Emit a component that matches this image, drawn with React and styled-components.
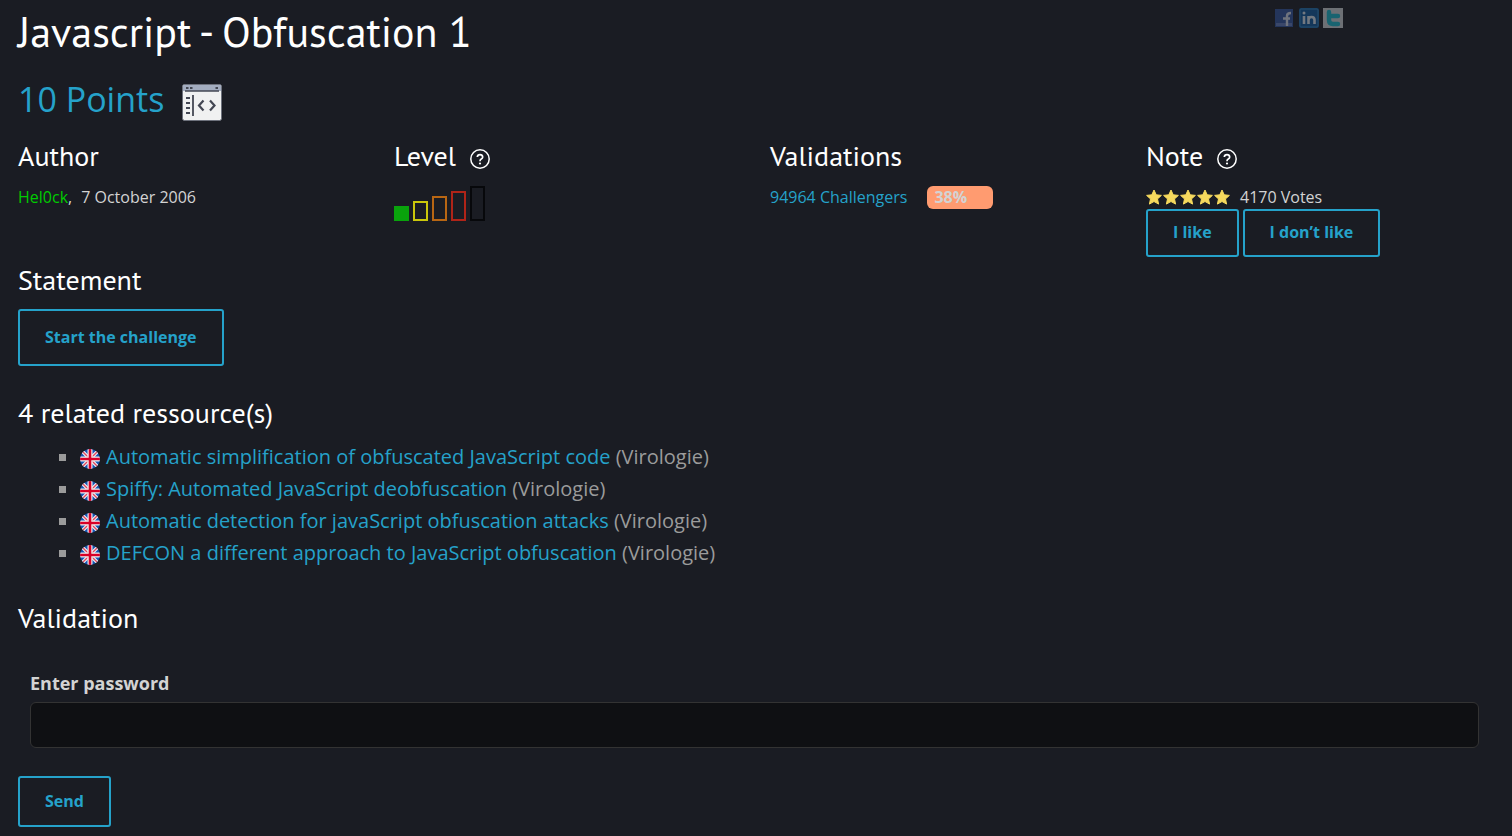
import React from "react";
import styled, { createGlobalStyle } from "styled-components";

const GlobalStyle = createGlobalStyle`
  *, *::before, *::after { box-sizing: border-box; }
  body {
    margin: 0;
    background: #1a1c23;
    color: #d3d3d3;
    font-family: "Open Sans", "Noto Sans", sans-serif;
    font-size: 16px;
    line-height: 24px;
  }
  svg { display: block; flex: none; }
`;

const blue = "#25a2ca";

const Page = styled.main`
  padding: 0 0 8px 8px;
`;

const Section = styled.section`
  padding: 0 10px;
  margin-top: ${(p) => p.$space || 0}px;
`;

const TitleRow = styled.header`
  display: grid;
  grid-template-columns: 5fr 1fr;
`;

const Title = styled.h1`
  margin: 0;
  padding: 4px 10px 0;
  color: #fff;
  font-family: "PT Sans", Lato, sans-serif;
  font-size: 42px;
  font-weight: 400;
  line-height: 56px;
`;

const Social = styled.nav`
  display: flex;
  gap: 4px;
  padding: 8px 14px;
  opacity: 0.5;
`;

const SocialLink = styled.a`
  display: block;
  width: 20px;
  height: 20px;
`;

const Points = styled.p`
  display: flex;
  align-items: center;
  gap: 18px;
  margin: 0;
  padding: 15px 10px 0;
  color: ${blue};
  font-size: 34px;
  line-height: 48px;

  svg { margin-top: 6px; }
`;

const Facts = styled.div`
  display: grid;
  grid-template-columns: repeat(4, 1fr);
  margin-top: 17px;
`;

const Fact = styled.section`
  padding: 0 10px;
`;

const Heading = styled.h2`
  display: flex;
  align-items: center;
  gap: 14px;
  margin: 0;
  color: #fff;
  font-family: "PT Sans", Lato, sans-serif;
  font-size: 28px;
  font-weight: 400;
  line-height: 32px;
`;

const HelpLink = styled.a`
  color: #fff;
  margin-top: 6px;
`;

const FactLine = styled.div`
  display: flex;
  align-items: center;
  gap: ${(p) => p.$gap || 9}px;
  margin-top: 13px;
`;

const TextLink = styled.a`
  color: ${(p) => (p.$author ? "#00cc00" : blue)};
  text-decoration: none;
`;

const Levels = styled.div`
  display: flex;
  align-items: flex-end;
  gap: 4px;
  height: 35px;
  margin-top: 14px;
`;

const Level = styled.span`
  width: 15px;
  height: ${(p) => p.$height}px;
  border: 2px solid ${(p) => p.$color};
  background: ${(p) => (p.$filled ? p.$color : "transparent")};
`;

const Rate = styled.strong`
  width: 66px;
  height: 23px;
  padding-left: 7px;
  border-radius: 6px;
  background: #ff9b70;
  color: #d3d3d3;
  line-height: 23px;
`;

const Stars = styled.span`
  display: flex;
  width: 85px;
`;

const Actions = styled.div`
  display: flex;
  gap: 4px;
`;

const buttonPadding = {
  small: "11px 25px 12px",
  medium: "13px 25px",
  large: "16px 25px",
};

const Button = styled.button`
  padding: ${(p) => buttonPadding[p.$size]};
  border: 2px solid ${blue};
  border-radius: 3px;
  background: transparent;
  color: ${blue};
  font: 700 16px/21px "Open Sans", "Noto Sans", sans-serif;
  cursor: pointer;
`;

const Resources = styled.ul`
  margin: 12px 0 0;
  padding: 0 0 0 40px;
  list-style: none;
  color: #9b9b9b;
  font-size: 20px;
  line-height: 32px;
`;

const Resource = styled.li`
  display: flex;
  align-items: center;
  gap: 6px;

  &::before {
    content: "";
    width: 7px;
    height: 7px;
    margin: 0 8px 0 1px;
    background: #9b9b9b;
  }

  svg { margin-top: 4px; }
`;

const Field = styled.div`
  display: flex;
  flex-direction: column;
  gap: 7px;
  margin: 37px 23px 28px 12px;
`;

const Label = styled.label`
  font-size: 18px;
  font-weight: 700;
`;

const Input = styled.input`
  width: 100%;
  height: 46px;
  padding: 0 12px;
  border: 1px solid #333;
  border-radius: 6px;
  background: #0f1013;
  color: #d3d3d3;
  font: inherit;
`;

function FacebookIcon() {
  return (
    <svg width="20" height="20" viewBox="0 0 20 20">
      <rect x="0" y="1" width="18" height="18" fill="#2f4f93" />
      <rect x="1" y="15" width="16" height="3" fill="#5a72ae" />
      <path d="M12 18V8q0-3 4-3M8 10.500h7" fill="none" stroke="#c3c9d6" strokeWidth="2.400" />
    </svg>
  );
}

function LinkedinIcon() {
  return (
    <svg width="20" height="20" viewBox="0 0 20 20">
      <rect width="20" height="20" rx="2" fill="#0f5291" />
      <rect x="1" y="1" width="18" height="18" rx="1" fill="none" stroke="#2f7fb5" />
      <path d="M5 8v8M9.500 16V8M9.500 12q0-3 3-3t3 3v4" fill="none" stroke="#c9d3dc" strokeWidth="2.600" />
      <circle cx="5" cy="5" r="1.500" fill="#c9d3dc" />
    </svg>
  );
}

function TwitterIcon() {
  return (
    <svg width="20" height="20" viewBox="0 0 20 20">
      <rect width="20" height="20" fill="#bfc3c7" />
      <path d="M6 4v8q0 4 4 4h5M6 8h9" fill="none" stroke="#18a9bd" strokeWidth="4.400" strokeLinecap="round" />
    </svg>
  );
}

function CodeWindowIcon() {
  return (
    <svg width="40" height="37" viewBox="0 0 40 37">
      <rect x="0.5" y="0.5" width="39" height="36" rx="2" fill="#f0f1f1" stroke="#6d717c" />
      <path d="M1 2q0-1 1-1h36q1 0 1 1v5H1z" fill="#a3adc0" />
      <path d="M3 7h34" stroke="#434753" strokeWidth="1.600" />
      <path d="M4 4h2.500M8 4h2.500M33.500 4h2.500M4 14h4M4 19h4M4 24h4M4 29h4" stroke="#434753" strokeWidth="2" />
      <path d="M11 11v21" stroke="#434753" strokeWidth="1.800" />
      <path d="M21.500 16.500l-4.500 5 4.500 5M28 16.500l4.500 5-4.500 5" fill="none" stroke="#434753" strokeWidth="2.200" />
    </svg>
  );
}

function HelpIcon() {
  return (
    <svg width="20" height="20" viewBox="0 0 20 20" fill="none" stroke="currentColor">
      <circle cx="10" cy="10" r="9.200" strokeWidth="1.500" />
      <path d="M7.300 8Q7.500 5.600 10 5.600T12.700 8Q12.700 9.200 11.300 10T10 12.200" strokeWidth="1.700" />
      <circle cx="10" cy="14.500" r="1.100" fill="currentColor" stroke="none" />
    </svg>
  );
}

function StarIcon() {
  return (
    <svg width="17" height="17" viewBox="0 0 17 17">
      <path
        d="M8 1l2.200 4.800 5.200.6-3.900 3.500 1.100 5.200L8 12.500l-4.600 2.600 1.100-5.200L.6 6.400l5.200-.6z"
        fill="#f6d95d"
        stroke="#f6d95d"
        strokeLinejoin="round"
      />
    </svg>
  );
}

function FlagIcon({ id }) {
  return (
    <svg width="20" height="20" viewBox="0 0 20 20">
      <clipPath id={id}>
        <circle cx="10" cy="10" r="10" />
      </clipPath>
      <g clipPath={`url(#${id})`}>
        <rect width="20" height="20" fill="#1555b4" />
        <path d="M1 1l18 18M19 1L1 19" stroke="#f0f0f0" strokeWidth="3.600" />
        <path d="M1 1l18 18M19 1L1 19" stroke="#e0435c" strokeWidth="1.300" />
        <path d="M10 0v20M0 10h20" stroke="#f0f0f0" strokeWidth="5" />
        <path d="M10 0v20M0 10h20" stroke="#d80027" strokeWidth="2.600" />
      </g>
    </svg>
  );
}

const levels = [
  { height: 15, color: "#09a30c", filled: true },
  { height: 20, color: "#cbc70b" },
  { height: 25, color: "#b86613" },
  { height: 30, color: "#b02418" },
  { height: 35, color: "#07080b" },
];

const resources = [
  "Automatic simplification of obfuscated JavaScript code",
  "Spiffy: Automated JavaScript deobfuscation",
  "Automatic detection for javaScript obfuscation attacks",
  "DEFCON a different approach to JavaScript obfuscation",
];

export default function App() {
  return (
    <>
      <GlobalStyle />
      <Page>
        <TitleRow>
          <Title>Javascript - Obfuscation 1</Title>
          <Social aria-label="Share">
            <SocialLink href="#facebook" aria-label="Facebook"><FacebookIcon /></SocialLink>
            <SocialLink href="#linkedin" aria-label="LinkedIn"><LinkedinIcon /></SocialLink>
            <SocialLink href="#twitter" aria-label="Twitter"><TwitterIcon /></SocialLink>
          </Social>
        </TitleRow>
        <Points>
          10 Points
          <CodeWindowIcon />
        </Points>

        <Facts>
          <Fact>
            <Heading>Author</Heading>
            <FactLine>
              <span><TextLink $author href="#author">Hel0ck</TextLink>,</span>
              <span>7 October 2006</span>
            </FactLine>
          </Fact>
          <Fact>
            <Heading>
              Level
              <HelpLink href="#level-help" aria-label="About levels"><HelpIcon /></HelpLink>
            </Heading>
            <Levels role="img" aria-label="Level 1 of 5">
              {levels.map((l) => (
                <Level key={l.height} $height={l.height} $color={l.color} $filled={l.filled} />
              ))}
            </Levels>
          </Fact>
          <Fact>
            <Heading>Validations</Heading>
            <FactLine $gap={20}>
              <TextLink href="#challengers">94964 Challengers</TextLink>
              <Rate>38%</Rate>
            </FactLine>
          </Fact>
          <Fact>
            <Heading>
              Note
              <HelpLink href="#note-help" aria-label="About notes"><HelpIcon /></HelpLink>
            </Heading>
            <FactLine>
              <Stars role="img" aria-label="5 stars">
                {[1, 2, 3, 4, 5].map((n) => <StarIcon key={n} />)}
              </Stars>
              <span>4170 Votes</span>
            </FactLine>
            <Actions>
              <Button type="button" $size="small">I like</Button>
              <Button type="button" $size="small">I don’t like</Button>
            </Actions>
          </Fact>
        </Facts>

        <Section $space={7}>
          <Heading>Statement</Heading>
          <FactLine>
            <Button type="button" $size="large">Start the challenge</Button>
          </FactLine>
        </Section>

        <Section $space={31}>
          <Heading>4 related ressource(s)</Heading>
          <Resources>
            {resources.map((title, i) => (
              <Resource key={title}>
                <FlagIcon id={`flag-${i}`} />
                <span><TextLink href={`#resource-${i}`}>{title}</TextLink> (Virologie)</span>
              </Resource>
            ))}
          </Resources>
        </Section>

        <Section as="form" $space={33} onSubmit={(e) => e.preventDefault()}>
          <Heading>Validation</Heading>
          <Field>
            <Label htmlFor="password">Enter password</Label>
            <Input id="password" type="text" />
          </Field>
          <Button type="submit" $size="medium">Send</Button>
        </Section>
      </Page>
    </>
  );
}
